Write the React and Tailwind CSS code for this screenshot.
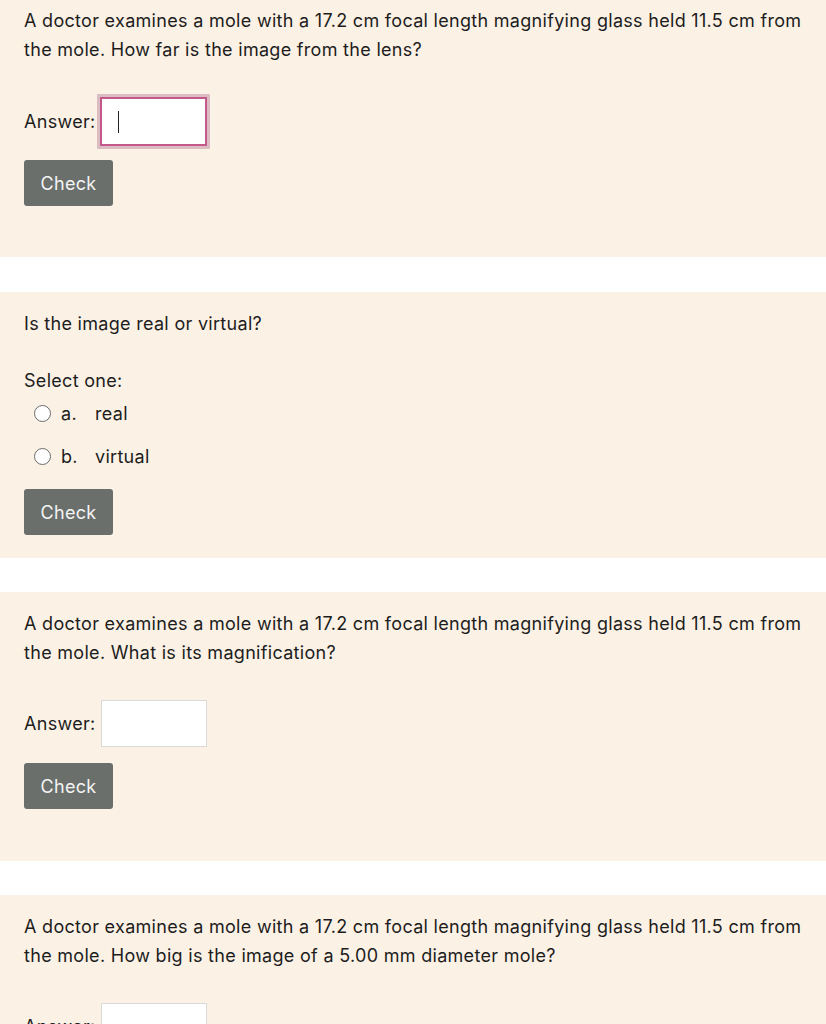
const Q = "A doctor examines a mole with a 17.2 cm focal length magnifying glass held 11.5 cm from";

function CheckButton() {
  return (
    <button className="h-[46px] w-[89px] rounded-[3px] bg-[#6a6f6c] text-[18px] tracking-[0.3px] text-[#f4f4f4]">
      Check
    </button>
  );
}

function AnswerRow({ focused }) {
  return (
    <div className="flex items-center gap-[5px]">
      <span>Answer:</span>
      {focused ? (
        <div className="-ml-[4px] rounded-[1px] bg-[#dbbcc2] p-[3px]">
          <div className="flex h-[49px] w-[107px] items-center border-2 border-[#c4588a] bg-white pl-[16px]">
            <span className="h-[22px] w-px bg-[#222]" />
          </div>
        </div>
      ) : (
        <div className="h-[47px] w-[106px] border border-[#d9d9d9] bg-white" />
      )}
    </div>
  );
}

function Radio({ letter, label }) {
  return (
    <div className="flex items-center pl-[10px]">
      <span className="h-[17px] w-[17px] rounded-full border border-[#6b6b6b] bg-white" />
      <span className="ml-[10px] w-[34px]">{letter}</span>
      <span>{label}</span>
    </div>
  );
}

export default function App() {
  return (
    <div
      className="min-h-screen bg-white text-[18px] leading-[29px] tracking-[0.3px] text-[#1d1d1d]"
      style={{ fontFamily: "Inter, 'Noto Sans', sans-serif" }}
    >
      <section className="h-[257px] bg-[#fcf1e5] px-[24px] pt-[6px]">
        <p>{Q}</p>
        <p>the mole. How far is the image from the lens?</p>
        <div className="mt-[30px]">
          <AnswerRow focused />
        </div>
        <div className="mt-[11px]">
          <CheckButton />
        </div>
      </section>

      <section className="mt-[35px] h-[266px] bg-[#fcf1e5] px-[24px] pt-[17px]">
        <p>Is the image real or virtual?</p>
        <p className="mt-[28px]">Select one:</p>
        <div className="mt-[4px] flex flex-col gap-[14px]">
          <Radio letter="a." label="real" />
          <Radio letter="b." label="virtual" />
        </div>
        <div className="mt-[18px]">
          <CheckButton />
        </div>
      </section>

      <section className="mt-[34px] h-[269px] bg-[#fcf1e5] px-[24px] pt-[17px]">
        <p>{Q}</p>
        <p>the mole. What is its magnification?</p>
        <div className="mt-[33px]">
          <AnswerRow />
        </div>
        <div className="mt-[16px]">
          <CheckButton />
        </div>
      </section>

      <section className="mt-[34px] h-[200px] bg-[#fcf1e5] px-[24px] pt-[17px]">
        <p>{Q}</p>
        <p>the mole. How big is the image of a 5.00 mm diameter mole?</p>
        <div className="mt-[33px]">
          <AnswerRow />
        </div>
      </section>
    </div>
  );
}
